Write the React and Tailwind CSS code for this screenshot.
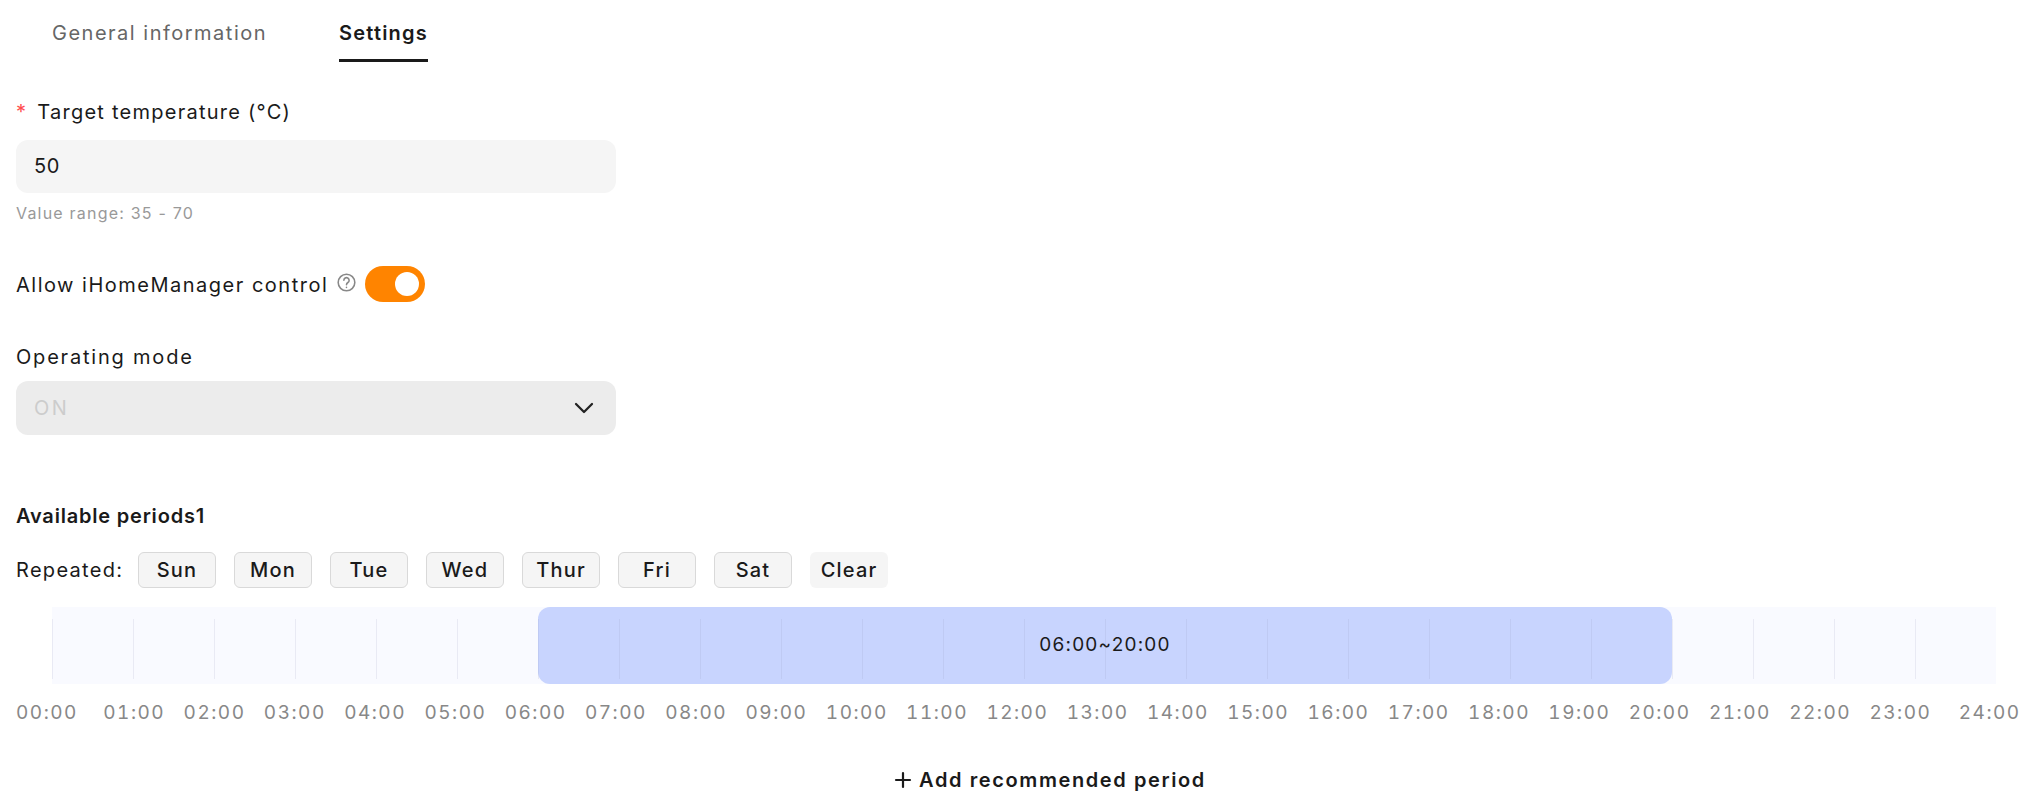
import { ChevronDown, Plus } from "lucide-react";

const days = ["Sun", "Mon", "Tue", "Wed", "Thur", "Fri", "Sat"];
const hours = Array.from({ length: 25 }, (_, i) => `${String(i).padStart(2, "0")}:00`);

export default function App() {
  return (
    <div className="h-[805px] bg-white px-4 font-['Inter',sans-serif] text-[#1a1a1a] overflow-hidden">
      {/* Tabs */}
      <div className="flex h-[62px] pl-9 gap-[72px] text-[20px]">
        <div className="pt-[19px] leading-7 text-[#666] tracking-[1.5px]">General information</div>
        <div className="pt-[19px] leading-7 font-semibold tracking-[1.2px] border-b-[3px] border-[#1a1a1a]">Settings</div>
      </div>

      {/* Target temperature */}
      <div className="mt-[36px] flex items-center h-7 text-[20px] tracking-[1.25px]">
        <span className="text-[#ff4d4f] mr-[10px]">*</span>
        Target temperature (°C)
      </div>
      <div className="mt-[14px] w-[600px] h-[53px] rounded-xl bg-[#f5f5f5] px-[18px] pb-[2px] flex items-center text-[20px] tracking-[0.7px]">50</div>
      <div className="mt-2 text-[16px] leading-6 text-[#999] tracking-[1.2px]">Value range: 35 - 70</div>

      {/* iHomeManager */}
      <div className="mt-[41px] flex items-center h-9 text-[20px] tracking-[1.5px]">
        <span className="pt-[2px]">Allow iHomeManager control</span>
        <svg className="ml-2 w-[21px] h-[21px] text-[#888] -mt-1" viewBox="0 0 24 24" fill="none" stroke="currentColor" strokeWidth="1.8" strokeLinecap="round">
          <circle cx="12" cy="12" r="9.5" />
          <path d="M9 9.5a3 3 0 1 1 4.6 2.5c-1 .7-1.6 1.3-1.6 2.6" />
          <path d="M12 17.6v.2" />
        </svg>
        <div className="ml-2 w-[60px] h-9 rounded-full bg-[#ff8400] flex items-center justify-end pr-[6px]">
          <div className="w-6 h-6 rounded-full bg-white" />
        </div>
      </div>

      {/* Operating mode */}
      <div className="mt-[41px] h-7 flex items-center text-[20px] tracking-[1.8px]">Operating mode</div>
      <div className="mt-[10px] w-[600px] h-[54px] rounded-xl bg-[#ececec] pl-[18px] pr-4 flex items-center justify-between text-[20px] tracking-[2.5px] text-[#ccc]">
        ON
        <ChevronDown className="w-8 h-8 text-[#222]" strokeWidth={1.7} />
      </div>

      {/* Available periods */}
      <div className="mt-[67px] h-7 flex items-center text-[20px] font-semibold tracking-[0.8px]">Available periods1</div>
      <div className="mt-[22px] flex items-center h-9">
        <span className="w-[122px] text-[20px] tracking-[1.3px]">Repeated:</span>
        <div className="flex gap-[18px]">
          {days.map((d) => (
            <button key={d} className="w-[78px] h-9 rounded-md bg-[#f5f5f5] border border-[#d9d9d9] text-[20px] font-medium tracking-[1.2px]">
              {d}
            </button>
          ))}
          <button className="w-[78px] h-9 rounded-md bg-[#f5f5f5] text-[20px] font-medium tracking-[1.2px]">Clear</button>
        </div>
      </div>

      {/* Timeline */}
      <div className="relative mt-[19px] ml-9 w-[1944px] h-[77px] bg-[#f9faff]">
        <div className="absolute left-[486px] w-[1134px] inset-y-0 rounded-xl bg-[#c8d4fe] flex items-center justify-center text-[19px] tracking-[1.2px] z-10">
          06:00~20:00
        </div>
        <div className="grid grid-cols-24 pt-3 pb-[5px] h-full relative z-10 pointer-events-none">
          {hours.slice(0, 24).map((h) => (
            <div key={h} className="border-l border-[#8a93b8]/15" />
          ))}
        </div>
      </div>
      <div className="mt-[17px] -mr-[6px] flex justify-between text-[19px] leading-6 text-[#888] tracking-[1.5px] tabular-nums">
        <span className="mr-[7px]">{hours[0]}</span>
        {hours.slice(1, 24).map((h) => (
          <span key={h}>{h}</span>
        ))}
        <span className="ml-[9px]">{hours[24]}</span>
      </div>

      {/* Add */}
      <div className="mt-[40px] flex justify-center items-center gap-1 text-[20px] font-semibold tracking-[1.6px] pl-[66px]">
        <Plus className="w-6 h-6" strokeWidth={2.2} />
        Add recommended period
      </div>
    </div>
  );
}
